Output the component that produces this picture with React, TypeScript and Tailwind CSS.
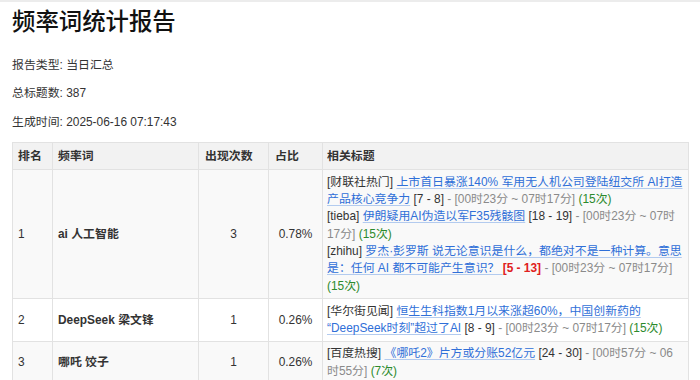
import React from "react";

const font = { fontFamily: '"Liberation Sans", "Noto Sans CJK SC", sans-serif' };

function Link({ children }: { children: React.ReactNode }) {
  return (
    <span className="text-[#2f6fd8] underline decoration-[#b3cbef] underline-offset-[2px]">{children}</span>
  );
}
function Time({ children }: { children: React.ReactNode }) {
  return <span className="text-[#8a8a8a]">{children}</span>;
}
function Count({ children }: { children: React.ReactNode }) {
  return <span className="text-[#2c8a2c]">{children}</span>;
}

const td = "border border-[#e2e2e2] px-[5px] py-[3.5px] align-middle";
const th = "border border-[#e2e2e2] px-[5px] py-[4.5px] text-left font-bold";

export default function App() {
  return (
    <div className="w-[700px] h-[380px] overflow-hidden bg-white text-[#333]" style={font}>
      <div className="h-[2px] bg-[#ececec]" />
      <div className="px-[12px] pt-[6px]">
        <h1 className="text-[23.4px] leading-[28px] font-medium text-[#111]">频率词统计报告</h1>
        <p className="mt-[20.5px] text-[11.9px] leading-[17px]">报告类型: 当日汇总</p>
        <p className="mt-[11.5px] text-[11.9px] leading-[17px]">总标题数: 387</p>
        <p className="mt-[11.5px] text-[11.9px] leading-[17px]">生成时间: 2025-06-16 07:17:43</p>
        <table className="mt-[11.5px] w-[676px] table-fixed border-collapse text-[11.9px] leading-[17.3px]">
          <colgroup>
            <col className="w-[40px]" />
            <col className="w-[146px]" />
            <col className="w-[70px]" />
            <col className="w-[54px]" />
            <col className="w-[366px]" />
          </colgroup>
          <tbody>
            <tr className="bg-[#f2f2f2]">
              <th className={th}>排名</th>
              <th className={th}>频率词</th>
              <th className={th + " !px-[6px]"}>出现次数</th>
              <th className={th + " !px-[6px]"}>占比</th>
              <th className={th + " !px-[4px]"}>相关标题</th>
            </tr>
            <tr className="bg-[#f9f9f9]">
              <td className={td}>1</td>
              <td className={td + " font-bold"}>ai 人工智能</td>
              <td className={td + " text-center"}>3</td>
              <td className={td + " text-center"}>0.78%</td>
              <td className={td + " !px-[4px]"}>
                <div>
                  [财联社热门] <Link>上市首日暴涨140% 军用无人机公司登陆纽交所 AI打造产品核心竞争力</Link> [7 - 8] <Time>- [00时23分 ~ 07时17分]</Time> <Count>(15次)</Count>
                </div>
                <div>
                  [tieba] <Link>伊朗疑用AI伪造以军F35残骸图</Link> [18 - 19] <Time>- [00时23分 ~ 07时17分]</Time> <Count>(15次)</Count>
                </div>
                <div>
                  [zhihu] <Link>罗杰·彭罗斯 说无论意识是什么，都绝对不是一种计算。意思是：任何 AI 都不可能产生意识？ </Link> <span className="font-bold text-[#e02020]">[5 - 13]</span> <Time>- [00时23分 ~ 07时17分]</Time> <Count>(15次)</Count>
                </div>
              </td>
            </tr>
            <tr className="bg-white">
              <td className={td}>2</td>
              <td className={td + " font-bold"}>DeepSeek 梁文锋</td>
              <td className={td + " text-center"}>1</td>
              <td className={td + " text-center"}>0.26%</td>
              <td className={td + " !px-[4px]"}>
                <div>
                  [华尔街见闻] <Link>恒生生科指数1月以来涨超60%，中国创新药的<wbr />“DeepSeek时刻”超过了AI</Link> [8 - 9] <Time>- [00时23分 ~ 07时17分]</Time> <Count>(15次)</Count>
                </div>
              </td>
            </tr>
            <tr className="bg-[#f9f9f9]">
              <td className={td}>3</td>
              <td className={td + " font-bold"}>哪吒 饺子</td>
              <td className={td + " text-center"}>1</td>
              <td className={td + " text-center"}>0.26%</td>
              <td className={td + " !px-[4px]"}>
                <div>
                  [百度热搜] <Link>《哪吒2》片方或分账52亿元</Link> [24 - 30] <Time>- [00时57分 ~ 06时55分]</Time> <Count>(7次)</Count>
                </div>
              </td>
            </tr>
          </tbody>
        </table>
      </div>
    </div>
  );
}
